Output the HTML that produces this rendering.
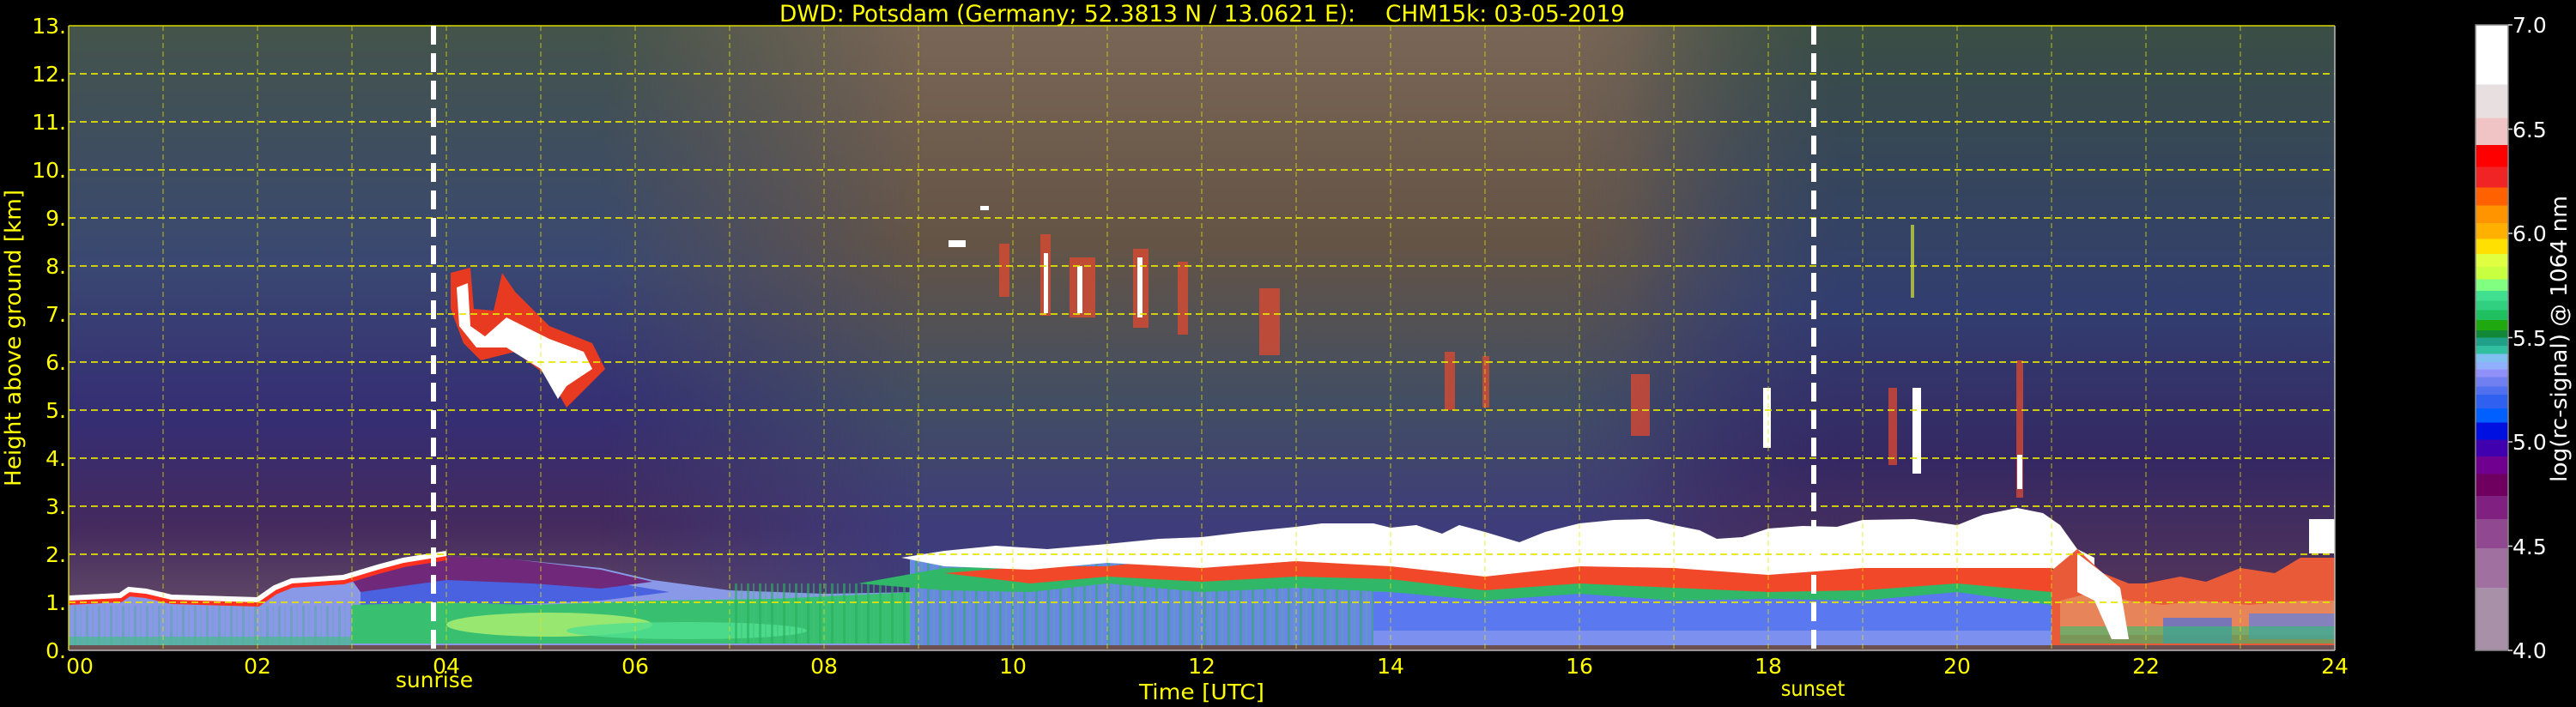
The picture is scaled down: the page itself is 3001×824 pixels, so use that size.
<!DOCTYPE html>
<html><head><meta charset="utf-8"><style>
html,body{margin:0;padding:0;background:#000;width:3001px;height:824px;overflow:hidden}
svg{display:block}
</style></head><body>
<svg width="3001" height="824" viewBox="0 0 3001 824" xmlns="http://www.w3.org/2000/svg">
<defs>
<linearGradient id="skyL" x1="0" y1="0" x2="0" y2="1">
 <stop offset="0" stop-color="#44544a"/><stop offset="0.38" stop-color="#3a4872"/>
 <stop offset="0.62" stop-color="#352e74"/><stop offset="0.8" stop-color="#442a5e"/>
 <stop offset="0.92" stop-color="#5e4666"/><stop offset="1" stop-color="#5e4666"/>
</linearGradient>
<linearGradient id="skyM" x1="0" y1="0" x2="0" y2="1">
 <stop offset="0" stop-color="#7a6656"/><stop offset="0.35" stop-color="#645446"/>
 <stop offset="0.6" stop-color="#424e62"/><stop offset="0.8" stop-color="#3e3c7a"/>
 <stop offset="1" stop-color="#3e3c7a"/>
</linearGradient>
<linearGradient id="skyR" x1="0" y1="0" x2="0" y2="1">
 <stop offset="0" stop-color="#3a4e44"/><stop offset="0.45" stop-color="#323e70"/>
 <stop offset="0.7" stop-color="#352862"/><stop offset="0.88" stop-color="#4e325c"/>
 <stop offset="1" stop-color="#4e325c"/>
</linearGradient>
<linearGradient id="fadeM" x1="0" y1="0" x2="1" y2="0">
 <stop offset="0" stop-color="#fff" stop-opacity="0"/><stop offset="0.25" stop-color="#fff" stop-opacity="1"/>
 <stop offset="0.75" stop-color="#fff" stop-opacity="1"/><stop offset="1" stop-color="#fff" stop-opacity="0"/>
</linearGradient>
<mask id="mM"><rect x="700" y="30" width="1500" height="728" fill="url(#fadeM)"/></mask>
<linearGradient id="fadeR" x1="0" y1="0" x2="1" y2="0">
 <stop offset="0" stop-color="#fff" stop-opacity="0"/><stop offset="0.3" stop-color="#fff" stop-opacity="1"/>
 <stop offset="1" stop-color="#fff" stop-opacity="1"/>
</linearGradient>
<mask id="mR"><rect x="1900" y="30" width="820" height="728" fill="url(#fadeR)"/></mask>
<linearGradient id="cb" x1="0" y1="0" x2="0" y2="1">
 <stop offset="0" stop-color="#fff"/><stop offset="0.095" stop-color="#fff"/>
 <stop offset="0.095" stop-color="#e8e0e0"/><stop offset="0.149" stop-color="#e8e0e0"/>
 <stop offset="0.149" stop-color="#f0c4c4"/><stop offset="0.192" stop-color="#f0c4c4"/>
 <stop offset="0.192" stop-color="#ff0000"/><stop offset="0.227" stop-color="#ff0000"/>
 <stop offset="0.227" stop-color="#f02424"/><stop offset="0.26" stop-color="#f02424"/>
 <stop offset="0.26" stop-color="#ff6000"/><stop offset="0.289" stop-color="#ff6000"/>
 <stop offset="0.289" stop-color="#ff9400"/><stop offset="0.317" stop-color="#ff9400"/>
 <stop offset="0.317" stop-color="#ffb000"/><stop offset="0.342" stop-color="#ffb000"/>
 <stop offset="0.342" stop-color="#ffe000"/><stop offset="0.366" stop-color="#ffe000"/>
 <stop offset="0.366" stop-color="#e0ff40"/><stop offset="0.387" stop-color="#e0ff40"/>
 <stop offset="0.387" stop-color="#c8ff40"/><stop offset="0.407" stop-color="#c8ff40"/>
 <stop offset="0.407" stop-color="#80ff80"/><stop offset="0.425" stop-color="#80ff80"/>
 <stop offset="0.425" stop-color="#40e090"/><stop offset="0.441" stop-color="#40e090"/>
 <stop offset="0.441" stop-color="#30d080"/><stop offset="0.456" stop-color="#30d080"/>
 <stop offset="0.456" stop-color="#20c060"/><stop offset="0.472" stop-color="#20c060"/>
 <stop offset="0.472" stop-color="#20a810"/><stop offset="0.488" stop-color="#20a810"/>
 <stop offset="0.488" stop-color="#108838"/><stop offset="0.5" stop-color="#108838"/>
 <stop offset="0.5" stop-color="#20a088"/><stop offset="0.513" stop-color="#20a088"/>
 <stop offset="0.513" stop-color="#30c0a0"/><stop offset="0.526" stop-color="#30c0a0"/>
 <stop offset="0.526" stop-color="#80c0f0"/><stop offset="0.539" stop-color="#80c0f0"/>
 <stop offset="0.539" stop-color="#90b0ff"/><stop offset="0.551" stop-color="#90b0ff"/>
 <stop offset="0.551" stop-color="#9090f8"/><stop offset="0.563" stop-color="#9090f8"/>
 <stop offset="0.563" stop-color="#7080f0"/><stop offset="0.578" stop-color="#7080f0"/>
 <stop offset="0.578" stop-color="#5070f0"/><stop offset="0.591" stop-color="#5070f0"/>
 <stop offset="0.591" stop-color="#3060f0"/><stop offset="0.613" stop-color="#3060f0"/>
 <stop offset="0.613" stop-color="#0060ff"/><stop offset="0.636" stop-color="#0060ff"/>
 <stop offset="0.636" stop-color="#0010e0"/><stop offset="0.663" stop-color="#0010e0"/>
 <stop offset="0.663" stop-color="#4000b0"/><stop offset="0.69" stop-color="#4000b0"/>
 <stop offset="0.69" stop-color="#700090"/><stop offset="0.718" stop-color="#700090"/>
 <stop offset="0.718" stop-color="#700060"/><stop offset="0.753" stop-color="#700060"/>
 <stop offset="0.753" stop-color="#802080"/><stop offset="0.79" stop-color="#802080"/>
 <stop offset="0.79" stop-color="#904890"/><stop offset="0.837" stop-color="#904890"/>
 <stop offset="0.837" stop-color="#a070a0"/><stop offset="0.9" stop-color="#a070a0"/>
 <stop offset="0.9" stop-color="#a890a8"/><stop offset="1" stop-color="#a890a8"/>
</linearGradient>
<pattern id="streak" width="14" height="100" patternUnits="userSpaceOnUse">
 <rect x="2" width="3" height="100" fill="#28b060" opacity="0.8"/><rect x="9" width="2" height="100" fill="#40c080" opacity="0.6"/>
</pattern>
</defs>

<!-- sky -->
<rect x="80" y="30" width="2640" height="728" fill="url(#skyL)"/>
<rect x="700" y="30" width="1500" height="728" fill="url(#skyM)" mask="url(#mM)"/>
<rect x="1900" y="30" width="820" height="728" fill="url(#skyR)" mask="url(#mR)"/>

<!-- upper clouds -->
<path d="M525,318 L548,312 L552,360 L575,362 L585,318 L600,340 L640,380 L690,400 L705,430 L680,455 L660,475 L640,440 L600,410 L560,420 L540,400 L525,360 Z" fill="#e83a20"/>
<path d="M532,335 L545,330 L548,380 L565,392 L590,370 L640,395 L680,410 L690,430 L660,450 L650,465 L630,430 L590,405 L555,405 L535,380 Z" fill="#fff"/>
<g fill="#e04a30" opacity="0.75">
<rect x="1164" y="284" width="12" height="62"/><rect x="1212" y="273" width="12" height="95"/>
<rect x="1246" y="300" width="30" height="70"/><rect x="1320" y="290" width="18" height="92"/>
<rect x="1372" y="305" width="12" height="85"/><rect x="1467" y="336" width="24" height="78"/>
<rect x="1683" y="410" width="12" height="68"/><rect x="1727" y="415" width="8" height="60"/>
<rect x="1900" y="436" width="22" height="72"/><rect x="2200" y="452" width="10" height="90"/>
<rect x="2349" y="420" width="8" height="160"/>
</g>
<g fill="#fff">
<rect x="1216" y="295" width="5" height="70"/><rect x="1255" y="310" width="6" height="55"/>
<rect x="1325" y="300" width="6" height="70"/><rect x="1105" y="280" width="20" height="8"/>
<rect x="1142" y="240" width="10" height="5"/><rect x="2054" y="452" width="9" height="70"/>
<rect x="2228" y="452" width="10" height="100"/><rect x="2350" y="530" width="6" height="40"/>
</g>
<rect x="2226" y="262" width="4" height="85" fill="#c0d040" opacity="0.8"/>

<!-- lower boundary layer left -->
<path d="M80,758 L80,700 L140,697 L170,692 L200,699 L300,702 L320,688 L340,680 L400,676 L440,664 L470,656 L520,648 L600,652 L700,662 L760,676 L850,688 L960,692 L1070,690 L1070,758 Z" fill="#8a98e8"/>
<path d="M420,682 L520,660 L620,668 L720,680 L780,690 L700,700 L600,705 L420,705 Z" fill="#4a62e0"/>
<path d="M410,676 L440,664 L470,656 L520,648 L600,652 L700,664 L760,678 L700,686 L620,680 L520,676 L420,690 Z" fill="#70287a"/>
<path d="M410,705 L520,702 L620,705 L760,700 L900,698 L1070,690 L1120,690 L1120,750 L410,750 Z" fill="#38c070"/>
<ellipse cx="640" cy="728" rx="120" ry="14" fill="#b0f070" opacity="0.8"/>
<ellipse cx="800" cy="735" rx="140" ry="10" fill="#50e090" opacity="0.8"/>
<rect x="850" y="680" width="220" height="70" fill="url(#streak)" opacity="0.8"/>
<rect x="80" y="706" width="330" height="50" fill="url(#streak)" opacity="0.35"/>
<rect x="80" y="742" width="330" height="12" fill="#40c080" opacity="0.6"/>
<polyline points="80,700 140,697 150,690 170,692 200,699 300,702 320,688 340,680 400,676 440,664 470,656 520,648" fill="none" stroke="#ff3020" stroke-width="10"/>
<polyline points="80,697 140,694 150,687 170,689 200,696 300,699 320,685 340,677 400,673 440,661 470,653 520,645" fill="none" stroke="#fff" stroke-width="6"/>

<!-- midday lower -->
<rect x="1060" y="650" width="560" height="102" fill="#6c86e8"/>
<rect x="1060" y="650" width="560" height="102" fill="url(#streak)" opacity="0.7"/>
<!-- afternoon lower -->
<rect x="1600" y="690" width="800" height="62" fill="#5a78f0"/>
<rect x="1600" y="735" width="800" height="17" fill="#7c90f0"/>

<!-- cloud layer -->
<path d="M1000,680 L1100,662 L1200,660 L1290,665 L1400,655 L1510,650 L1620,655 L1730,660 L1840,650 L1950,660 L2060,655 L2170,650 L2280,655 L2390,665 L2390,705 L2280,690 L2170,700 L2060,698 L1950,700 L1840,692 L1730,700 L1620,690 L1510,685 L1400,690 L1290,680 L1200,690 L1100,688 Z" fill="#30b868"/>
<path d="M1100,668 L1200,660 L1290,660 L1400,648 L1510,640 L1620,645 L1730,650 L1840,640 L1950,650 L2060,645 L2170,640 L2280,645 L2390,655 L2390,690 L2280,680 L2170,688 L2060,690 L1950,685 L1840,680 L1730,688 L1620,675 L1510,672 L1400,678 L1290,672 L1200,680 Z" fill="#f04828"/>
<path d="M1050,650 L1100,642 L1160,636 L1220,640 L1290,634 L1350,628 L1400,626 L1450,620 L1510,614 L1540,610 L1600,610 L1620,615 L1650,612 L1680,622 L1700,612 L1730,620 L1770,632 L1800,620 L1840,610 L1880,606 L1920,605 L1950,612 L1980,618 L2000,628 L2030,626 L2060,616 L2100,613 L2140,614 L2170,606 L2230,605 L2280,612 L2310,600 L2350,592 L2380,598 L2400,612 L2420,640 L2440,650 L2440,680 L2390,662 L2280,662 L2170,662 L2060,670 L1950,662 L1840,660 L1730,672 L1620,660 L1510,654 L1400,662 L1290,656 L1200,664 L1100,660 Z" fill="#fff"/>

<!-- 21-24h -->
<path d="M2390,758 L2390,665 L2420,640 L2450,668 L2480,680 L2500,680 L2540,672 L2570,678 L2610,662 L2650,668 L2680,650 L2720,650 L2720,758 Z" fill="#e85a38"/>
<path d="M2400,700 L2440,690 L2480,700 L2520,705 L2560,700 L2620,705 L2680,700 L2720,700 L2720,740 L2400,740 Z" fill="#e8a070" opacity="0.6"/>
<rect x="2520" y="720" width="80" height="30" fill="#4a70e0" opacity="0.7"/>
<rect x="2620" y="715" width="100" height="30" fill="#5a80e8" opacity="0.7"/>
<rect x="2400" y="730" width="320" height="20" fill="#30c070" opacity="0.6"/>
<path d="M2420,645 L2450,668 L2470,685 L2480,745 L2460,745 L2440,700 L2420,690 Z" fill="#fff"/>
<rect x="2690" y="605" width="30" height="40" fill="#fff"/>

<rect x="80" y="752" width="2640" height="6" fill="#6a5050"/>

<!-- grid -->
<g stroke="#e6e600" stroke-width="2" stroke-dasharray="8,5" opacity="0.85">
<line x1="80" y1="702" x2="2720" y2="702"/><line x1="80" y1="646" x2="2720" y2="646"/>
<line x1="80" y1="590" x2="2720" y2="590"/><line x1="80" y1="534" x2="2720" y2="534"/>
<line x1="80" y1="478" x2="2720" y2="478"/><line x1="80" y1="422" x2="2720" y2="422"/>
<line x1="80" y1="366" x2="2720" y2="366"/><line x1="80" y1="310" x2="2720" y2="310"/>
<line x1="80" y1="254" x2="2720" y2="254"/><line x1="80" y1="198" x2="2720" y2="198"/>
<line x1="80" y1="142" x2="2720" y2="142"/><line x1="80" y1="86" x2="2720" y2="86"/>
</g>
<g stroke="#e6e600" stroke-width="1.5" stroke-dasharray="6,4" opacity="0.5">
<line x1="190" y1="30" x2="190" y2="758"/><line x1="300" y1="30" x2="300" y2="758"/>
<line x1="410" y1="30" x2="410" y2="758"/><line x1="520" y1="30" x2="520" y2="758"/>
<line x1="630" y1="30" x2="630" y2="758"/><line x1="740" y1="30" x2="740" y2="758"/>
<line x1="850" y1="30" x2="850" y2="758"/><line x1="960" y1="30" x2="960" y2="758"/>
<line x1="1070" y1="30" x2="1070" y2="758"/><line x1="1180" y1="30" x2="1180" y2="758"/>
<line x1="1290" y1="30" x2="1290" y2="758"/><line x1="1400" y1="30" x2="1400" y2="758"/>
<line x1="1510" y1="30" x2="1510" y2="758"/><line x1="1620" y1="30" x2="1620" y2="758"/>
<line x1="1730" y1="30" x2="1730" y2="758"/><line x1="1840" y1="30" x2="1840" y2="758"/>
<line x1="1950" y1="30" x2="1950" y2="758"/><line x1="2060" y1="30" x2="2060" y2="758"/>
<line x1="2170" y1="30" x2="2170" y2="758"/><line x1="2280" y1="30" x2="2280" y2="758"/>
<line x1="2390" y1="30" x2="2390" y2="758"/><line x1="2500" y1="30" x2="2500" y2="758"/>
<line x1="2610" y1="30" x2="2610" y2="758"/>
</g>
<line x1="80" y1="30" x2="2720" y2="30" stroke="#d8d800" stroke-width="1.5"/>
<line x1="80" y1="30" x2="80" y2="758" stroke="#d8d800" stroke-width="1.5"/>
<line x1="2720" y1="30" x2="2720" y2="758" stroke="#bbb" stroke-width="1.5"/>
<line x1="80" y1="758" x2="2720" y2="758" stroke="#bbb" stroke-width="1.5"/>

<line x1="505" y1="30" x2="505" y2="758" stroke="#fff" stroke-width="6" stroke-dasharray="22,10"/>
<line x1="2113" y1="30" x2="2113" y2="758" stroke="#fff" stroke-width="6" stroke-dasharray="22,10"/>

<g font-family="DejaVu Sans, Liberation Sans, sans-serif" fill="#ffff00">
<text x="908" y="25" font-size="27" font-family="DejaVu Sans Condensed, DejaVu Sans, sans-serif" textLength="671" lengthAdjust="spacingAndGlyphs">DWD: Potsdam (Germany; 52.3813 N / 13.0621 E):</text>
<text x="1614" y="25" font-size="27" font-family="DejaVu Sans Condensed, DejaVu Sans, sans-serif" textLength="279" lengthAdjust="spacingAndGlyphs">CHM15k: 03-05-2019</text>
<g font-size="25" text-anchor="end">
<text x="77" y="39">13.</text><text x="77" y="95">12.</text><text x="77" y="151">11.</text>
<text x="77" y="207">10.</text><text x="77" y="263">9.</text><text x="77" y="319">8.</text>
<text x="77" y="375">7.</text><text x="77" y="431">6.</text><text x="77" y="487">5.</text>
<text x="77" y="543">4.</text><text x="77" y="599">3.</text><text x="77" y="655">2.</text>
<text x="77" y="711">1.</text><text x="77" y="767">0.</text>
</g>
<g font-size="25" text-anchor="middle">
<text x="93" y="785">00</text><text x="300" y="785">02</text><text x="520" y="785">04</text>
<text x="740" y="785">06</text><text x="960" y="785">08</text><text x="1180" y="785">10</text>
<text x="1400" y="785">12</text><text x="1620" y="785">14</text><text x="1840" y="785">16</text>
<text x="2060" y="785">18</text><text x="2280" y="785">20</text><text x="2500" y="785">22</text>
<text x="2720" y="785">24</text>
<text x="506" y="801">sunrise</text>
<text x="2112" y="811" font-family="DejaVu Sans Condensed, DejaVu Sans, sans-serif">sunset</text>
<text x="1400" y="815" font-family="DejaVu Sans Condensed, DejaVu Sans, sans-serif" textLength="146" lengthAdjust="spacingAndGlyphs">Time [UTC]</text>
</g>
<text transform="translate(24,394) rotate(-90)" font-size="26" text-anchor="middle" font-family="DejaVu Sans Condensed, DejaVu Sans, sans-serif" textLength="346" lengthAdjust="spacingAndGlyphs">Height above ground [km]</text>
</g>

<rect x="2884" y="29" width="38" height="729" fill="url(#cb)"/>
<rect x="2884" y="29" width="38" height="729" fill="none" stroke="#888" stroke-width="1.5"/>
<g stroke="#ddd" stroke-width="1.5">
<line x1="2922" y1="29" x2="2927" y2="29"/><line x1="2922" y1="150.5" x2="2927" y2="150.5"/>
<line x1="2922" y1="272" x2="2927" y2="272"/><line x1="2922" y1="393.5" x2="2927" y2="393.5"/>
<line x1="2922" y1="515" x2="2927" y2="515"/><line x1="2922" y1="636.5" x2="2927" y2="636.5"/>
<line x1="2922" y1="758" x2="2927" y2="758"/>
</g>
<g font-family="DejaVu Sans, Liberation Sans, sans-serif" fill="#fff" font-size="25">
<text x="2927" y="38">7.0</text><text x="2927" y="160">6.5</text><text x="2927" y="281">6.0</text>
<text x="2927" y="403">5.5</text><text x="2927" y="524">5.0</text><text x="2927" y="646">4.5</text>
<text x="2927" y="767">4.0</text>
<text transform="translate(2990,395) rotate(-90)" font-size="26" text-anchor="middle" font-family="DejaVu Sans Condensed, DejaVu Sans, sans-serif" textLength="334" lengthAdjust="spacingAndGlyphs">log(rc-signal) @ 1064 nm</text>
</g>
</svg>
</body></html>
